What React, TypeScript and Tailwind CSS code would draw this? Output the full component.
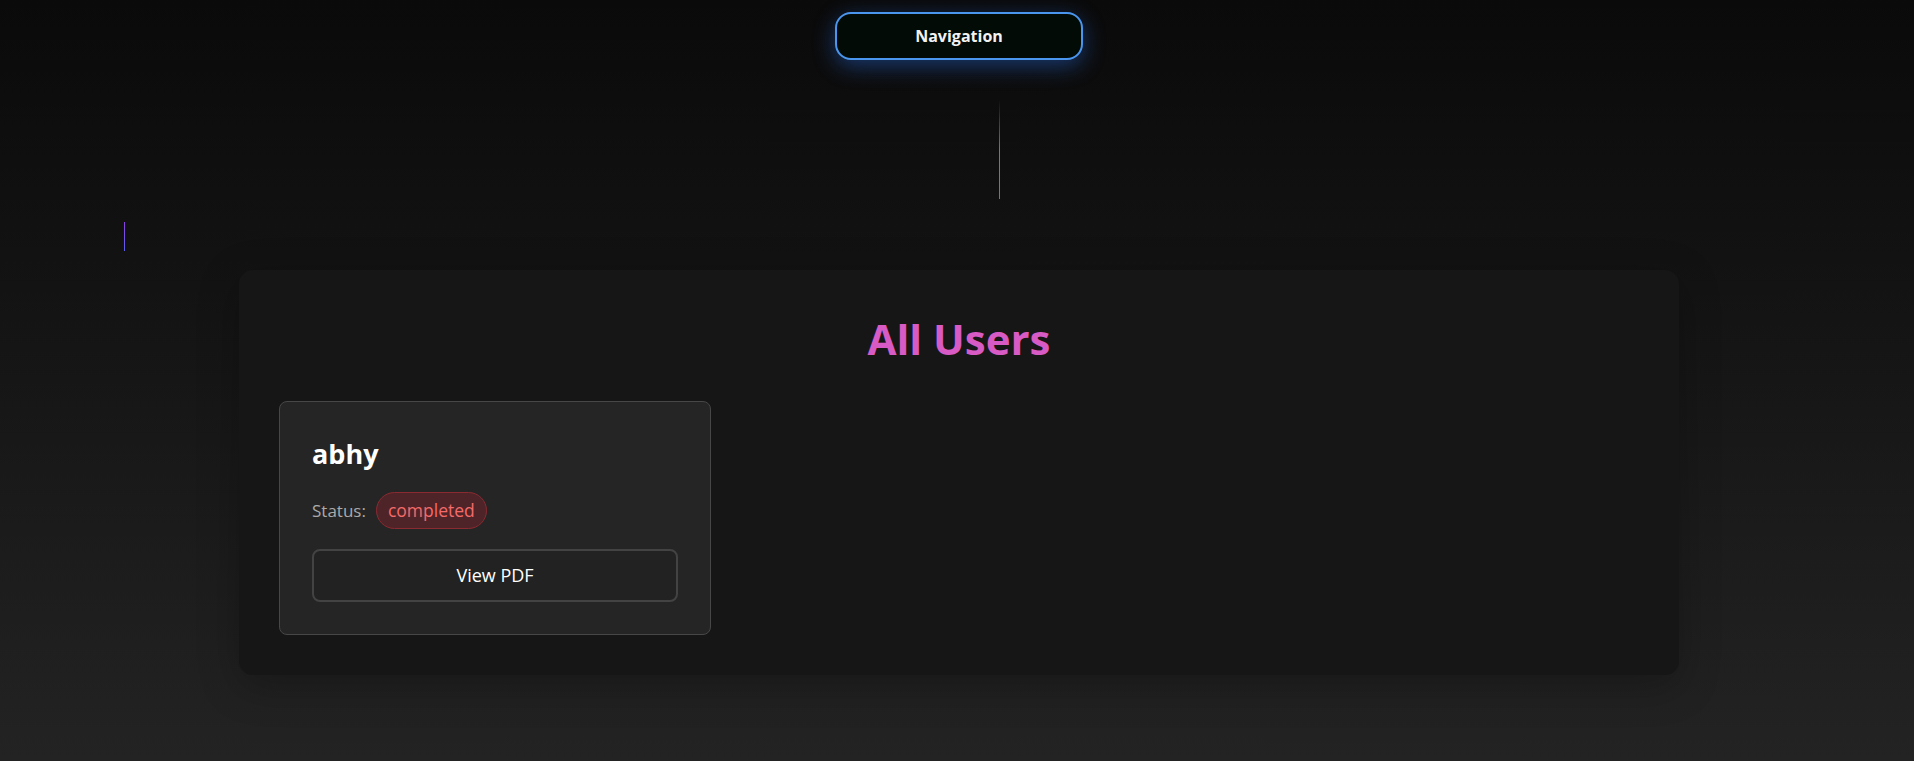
const users = [{ name: 'abhy', status: 'completed' }]

export default function App() {
  return (
    <div className="relative min-h-screen overflow-hidden bg-gradient-to-b from-[#0a0a0a] to-[#232323] font-['Open_Sans',sans-serif] text-white">
      {/* decorative falling lines */}
      <span className="absolute left-[999px] top-[100px] h-[99px] w-px bg-gradient-to-b from-transparent via-[#9b4fd9] to-[#6366f1]" />
      <span className="absolute left-[124px] top-[222px] h-[29px] w-px bg-gradient-to-b from-[#8b3fe0] to-[#5b5ff0]" />

      <header className="flex justify-center pt-3 pl-1">
        <button className="h-12 w-[248px] rounded-2xl border-2 border-[#4a96ee] bg-[#020b05] text-[16px] font-bold text-[#f2f2f2] shadow-[0_6px_22px_rgba(40,110,230,0.45)]">
          Navigation
        </button>
      </header>

      <main className="mt-[210px] ml-[239px] w-[1440px] rounded-[14px] bg-[#161616] p-10 shadow-[0_10px_40px_rgba(0,0,0,0.25)]">
        <h1 className="mb-[33px] text-center text-[42px] leading-[58px] font-bold text-[#d85ac4]">All Users</h1>
        <div className="grid grid-cols-3 gap-8">
          {users.map((u) => (
            <div key={u.name} className="rounded-lg border border-[#474747] bg-[#252525] p-8">
              <h3 className="text-[27px] leading-[40px] font-bold text-white">{u.name}</h3>
              <div className="mt-[18px] flex items-center gap-[10px]">
                <span className="text-[17px] text-[#aaaaaa]">Status:</span>
                <span className="rounded-full border border-[#8a2a31] bg-[#4f2428] px-[11px] py-[5px] text-[17.5px] leading-[25px] text-[#f46a6a]">
                  {u.status}
                </span>
              </div>
              <button className="mt-5 h-[53px] w-full rounded-lg border-2 border-[#434343] bg-[#222222] text-[18px] text-white">
                View PDF
              </button>
            </div>
          ))}
        </div>
      </main>
    </div>
  )
}
